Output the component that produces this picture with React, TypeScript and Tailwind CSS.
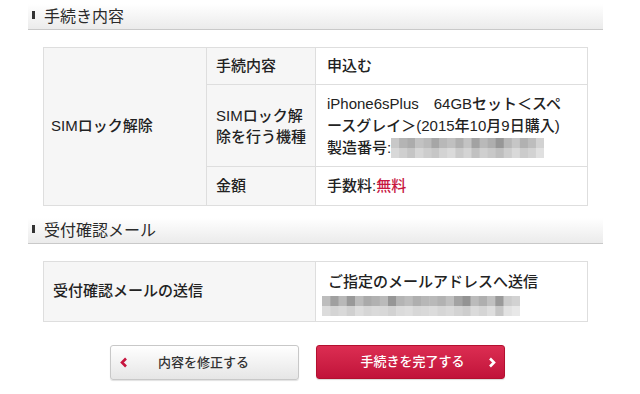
import type { ReactNode } from 'react';

const font = { fontFamily: '"Liberation Sans", "Noto Sans CJK JP", sans-serif' };

function SectionTitle({ children, className }: { children: ReactNode; className: string }) {
  return (
    <div
      className={`ml-[28px] w-[575px] h-[26px] flex items-center border-b border-[#c9c9c9] bg-gradient-to-b from-white to-[#ebebeb] ${className}`}
    >
      <span className="ml-[4px] w-[3px] h-[8px] bg-[#333] -mt-[4px]" />
      <span className="ml-[9px] text-[16px] text-[#2a2a2a] leading-none">{children}</span>
    </div>
  );
}

// pixelated blur over hidden personal data
function Mosaic({ w, cells }: { w: number; cells: string[][] }) {
  const cw = w / cells[0].length;
  return (
    <svg width={w} height={cells.length * 10} className="block">
      {cells.map((row, y) =>
        row.map((c, x) => <rect key={`${x}-${y}`} x={x * cw} y={y * 10} width={cw + 0.5} height={10.5} fill={c} />)
      )}
    </svg>
  );
}

const serial = [
  ['#c8c8c8', '#b4b4b4', '#acacac', '#c2c2c2', '#bababa', '#a6a6a6', '#b8b8b8', '#c0c0c0', '#b0b0b0', '#c3c3c3', '#a2a2a2', '#b9b9b9', '#aeaeae', '#979797', '#b7b7b7', '#c6c6c6', '#b1b1b1', '#bdbdbd', '#d2d2d2'],
  ['#d8d8d8', '#cfcfcf', '#c5c5c5', '#d6d6d6', '#cdcdcd', '#c6c6c6', '#d3d3d3', '#dadada', '#cacaca', '#d4d4d4', '#c1c1c1', '#cfcfcf', '#c8c8c8', '#bebebe', '#cdcdcd', '#d9d9d9', '#cbcbcb', '#d2d2d2', '#e0e0e0'],
];

const mail = [
  ['#bdbdbd', '#a0a0a0', '#b8b8b8', '#999999', '#bbbbbb', '#aaaaaa', '#b1b1b1', '#bababa', '#969696', '#b4b4b4', '#bcbcbc', '#afafaf', '#b7b7b7', '#b9b9b9', '#b2b2b2', '#bfbfbf', '#a3a3a3', '#939393', '#bbbbbb', '#afafaf', '#c0c0c0', '#9a9a9a', '#cbcbcb', '#d2d2d2'],
  ['#dcdcdc', '#d4d4d4', '#d9d9d9', '#d0d0d0', '#dddddd', '#d6d6d6', '#dadada', '#d8d8d8', '#d2d2d2', '#dbdbdb', '#dedede', '#d7d7d7', '#d9d9d9', '#dcdcdc', '#d6d6d6', '#dadada', '#d3d3d3', '#cdcdcd', '#dbdbdb', '#d5d5d5', '#dedede', '#c6c6c6', '#e2e2e2', '#e8e8e8'],
];

function Chevron({ dir, color }: { dir: 'left' | 'right'; color: string }) {
  return (
    <svg width="8" height="11" viewBox="0 0 8 11" className="block">
      <polyline
        points={dir === 'left' ? '6,1.5 2,5.5 6,9.5' : '2,1.5 6,5.5 2,9.5'}
        fill="none"
        stroke={color}
        strokeWidth="2.6"
      />
    </svg>
  );
}

export default function App() {
  return (
    <div className="w-[640px] h-[394px] bg-white pt-[4px] text-[#222] overflow-hidden" style={font}>
      <SectionTitle className="">手続き内容</SectionTitle>

      {/* procedure table */}
      <div className="ml-[43px] mt-[17px] w-[545px] flex border border-[#dedede] text-[15px] font-medium">
        <div className="w-[163px] shrink-0 bg-[#f6f6f6] border-r border-[#dedede] flex items-center pl-[7px]">
          SIMロック解除
        </div>
        <div className="flex-1 flex flex-col">
          <div className="h-[37px] flex border-b border-[#dedede]">
            <div className="w-[109px] shrink-0 bg-[#f6f6f6] border-r border-[#dedede] flex items-center pl-[9px]">
              手続内容
            </div>
            <div className="flex-1 flex items-center pl-[11px]">申込む</div>
          </div>
          <div className="h-[82px] flex border-b border-[#dedede]">
            <div className="w-[109px] shrink-0 bg-[#f6f6f6] border-r border-[#dedede] flex items-center pl-[9px] leading-[21px]">
              <div>
                SIMロック解
                <br />
                除を行う機種
              </div>
            </div>
            <div className="flex-1 flex items-center pl-[11px] leading-[22px] whitespace-nowrap">
              <div>
                <div>iPhone6sPlus　64GBセット＜スペ</div>
                <div>ースグレイ＞(2015年10月9日購入)</div>
                <div className="flex items-center">
                  製造番号:
                  <Mosaic w={153} cells={serial} />
                </div>
              </div>
            </div>
          </div>
          <div className="h-[38px] flex">
            <div className="w-[109px] shrink-0 bg-[#f6f6f6] border-r border-[#dedede] flex items-center pl-[9px]">
              金額
            </div>
            <div className="flex-1 flex items-center pl-[11px]">
              手数料:<span className="text-[#c7153f]">無料</span>
            </div>
          </div>
        </div>
      </div>

      <SectionTitle className="mt-[12px]">受付確認メール</SectionTitle>

      {/* mail table */}
      <div className="ml-[43px] mt-[17px] w-[545px] h-[61px] flex border border-[#dedede] text-[15px] font-medium">
        <div className="w-[272px] shrink-0 bg-[#f6f6f6] border-r border-[#dedede] flex items-center pl-[9px]">
          受付確認メールの送信
        </div>
        <div className="flex-1 pl-[12px] pt-[9px]">
          <div className="leading-[22px]">ご指定のメールアドレスへ送信</div>
          <div className="-ml-[6px] mt-[3px]">
            <Mosaic w={198} cells={mail} />
          </div>
        </div>
      </div>

      {/* buttons */}
      <div className="ml-[110px] mt-[23px] flex gap-[17px] text-[13px] font-medium">
        <div className="w-[189px] h-[35px] rounded-[3px] border border-[#c8c8c8] bg-gradient-to-b from-white to-[#e6e6e6] shadow-[0_1px_1px_rgba(0,0,0,0.12)] flex items-center px-[9px] text-[#333]">
          <Chevron dir="left" color="#c7153f" />
          <span className="flex-1 text-center pr-[10px]">内容を修正する</span>
        </div>
        <div className="w-[189px] h-[34px] rounded-[3px] border border-[#b3102f] bg-gradient-to-b from-[#dc2d52] to-[#c1123a] shadow-[0_1px_1px_rgba(0,0,0,0.15)] flex items-center pl-[20px] pr-[8px] text-white">
          <span className="flex-1 text-center">手続きを完了する</span>
          <Chevron dir="right" color="#ffffff" />
        </div>
      </div>
    </div>
  );
}
